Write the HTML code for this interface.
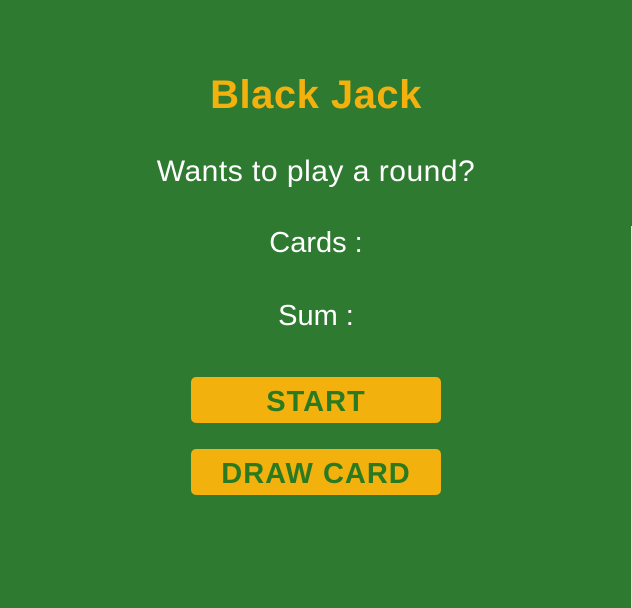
<!DOCTYPE html>
<html><head><style>
html,body{margin:0;padding:0}
body{width:632px;height:608px;background:#2e7a31;font-family:"Comic Sans MS","Liberation Sans",sans-serif;position:relative;overflow:hidden;color:#fff;text-align:center}
.t{position:absolute;left:0;width:632px;line-height:1}
h1{position:absolute;left:0;width:632px;margin:0;top:75px;font-size:40px;color:#f3b10e;line-height:1;letter-spacing:0.5px}
.b{position:absolute;left:191px;width:250px;height:46px;background:#f3b10e;border-radius:5px;color:#2a7a22;font-weight:bold;font-size:29px;line-height:50px;letter-spacing:1px}
.edge{position:absolute;left:631px;top:226px;width:1px;height:382px;background:#dfe6df}
</style></head><body>
<h1>Black Jack</h1>
<div class="t" style="top:157px;font-size:30px;letter-spacing:0.5px">Wants to play a round?</div>
<div class="t" style="top:229px;font-size:29px">Cards :</div>
<div class="t" style="top:302px;font-size:29px">Sum :</div>
<div class="b" style="top:377px">START</div>
<div class="b" style="top:449px">DRAW CARD</div>
<div class="edge"></div>
</body></html>
